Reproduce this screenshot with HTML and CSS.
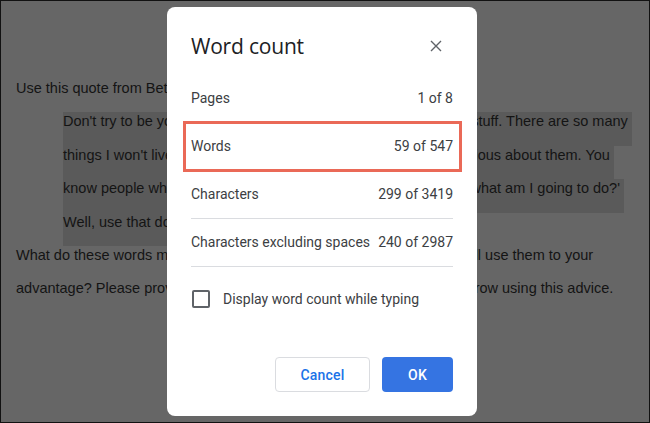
FILE: index.html
```html
<!DOCTYPE html>
<html lang="en">
<head>
<meta charset="utf-8">
<title>Word count</title>
<link rel="stylesheet" href="styles.css">
</head>
<body>
<div class="screen">
  <div class="doc">
    <div class="line">Use this quote from Bette Midler to answer the following questions.</div>
    <div class="quote">
      <div class="line sel">Don't try to be younger. Just open your mind. Stay interested in stuff. There are so many </div>
      <div class="line sel">things I won't live long enough to find out about, but I am still curious about them. You </div>
      <div class="line sel">know people who are 80 and they said, 'Oh my, I'm so old now, what am I going to do?' </div>
      <div class="line sel">Well, use that doubt. </div>
    </div>
    <div class="line">What do these words mean for you, and how do you believe that you will use them to your</div>
    <div class="line">advantage? Please provide some specific examples of how you could grow using this advice.</div>
  </div>

  <div class="dialog" role="dialog" aria-label="Word count">
    <div class="dialog-head">
      <h1 class="title">Word count</h1>
      <button class="close" aria-label="Close">
        <svg width="12" height="12" viewBox="0 0 12 12"><path d="M1 1 L11 11 M11 1 L1 11" stroke="#5f6368" stroke-width="1.4" fill="none"/></svg>
      </button>
    </div>
    <div class="stats">
      <div class="row"><span>Pages</span><span>1 of 8</span></div>
      <div class="row"><span>Words</span><span>59 of 547</span></div>
      <div class="row"><span>Characters</span><span>299 of 3419</span></div>
      <div class="row"><span>Characters excluding spaces</span><span>240 of 2987</span></div>
    </div>
    <label class="check"><span class="box"></span><span>Display word count while typing</span></label>
    <div class="actions">
      <button class="btn cancel">Cancel</button>
      <button class="btn ok">OK</button>
    </div>
    <div class="mark"></div>
  </div>
</div>
</body>
</html>
```
FILE: styles.css
```css
* { box-sizing: border-box; }
html, body { margin: 0; padding: 0; }
body { width: 650px; height: 423px; overflow: hidden; }

.screen {
  position: relative;
  width: 650px;
  height: 423px;
  background: #666666;
  border: 1px solid #111;
  overflow: hidden;
}

.doc {
  padding: 78px 0 0 15px;
  font-family: "Liberation Sans", Arial, sans-serif;
  font-size: 14.5px;
  color: #141414;
  white-space: nowrap;
}
.line {
  height: 33.4px;
  padding-top: 1px;
  width: fit-content;
}
.quote { padding-left: 47px; }
.sel { background: #5a5a5a; white-space: pre; }

.dialog {
  position: absolute;
  left: 166px;
  top: 6px;
  width: 310px;
  height: 409px;
  background: #fff;
  border-radius: 8px;
  padding: 24px 24px 24px 24px;
  display: flex;
  flex-direction: column;
  font-family: Roboto, "Noto Sans", sans-serif;
}
.dialog-head {
  display: flex;
  justify-content: space-between;
  align-items: center;
  height: 29px;
}
.title {
  margin: 0;
  font-family: "Open Sans", Roboto, sans-serif;
  font-weight: 400;
  font-size: 21px;
  color: #202124;
  letter-spacing: -0.2px;
}
.close {
  border: 0;
  background: none;
  padding: 0;
  width: 24px;
  height: 24px;
  display: flex;
  align-items: center;
  justify-content: center;
  margin-right: 5px;
}

.stats { margin-top: 15px; }
.row {
  display: flex;
  justify-content: space-between;
  align-items: center;
  height: 48px;
  padding-bottom: 1px;
  border-bottom: 1px solid #dadce0;
  font-size: 14px;
  color: #3c4043;
}

.check {
  margin-top: 23px;
  display: flex;
  align-items: center;
  gap: 13px;
  font-size: 14px;
  color: #3c4043;
}
.box {
  width: 18px;
  height: 18px;
  border: 2px solid #5f6368;
  border-radius: 2px;
  margin-left: 1px;
}

.actions {
  margin-top: auto;
  display: flex;
  justify-content: flex-end;
  gap: 12px;
}
.btn {
  height: 35px;
  border-radius: 4px;
  font-family: Roboto, sans-serif;
  font-weight: 500;
  font-size: 14px;
  letter-spacing: 0.2px;
}
.cancel {
  width: 95px;
  background: #fff;
  border: 1px solid #dadce0;
  color: #1a73e8;
}
.ok {
  width: 71px;
  background: #3574e2;
  border: 0;
  color: #fff;
}

.mark {
  position: absolute;
  left: 16px;
  top: 114px;
  width: 279px;
  height: 51px;
  border: 3.5px solid #ea6957;
}
```
